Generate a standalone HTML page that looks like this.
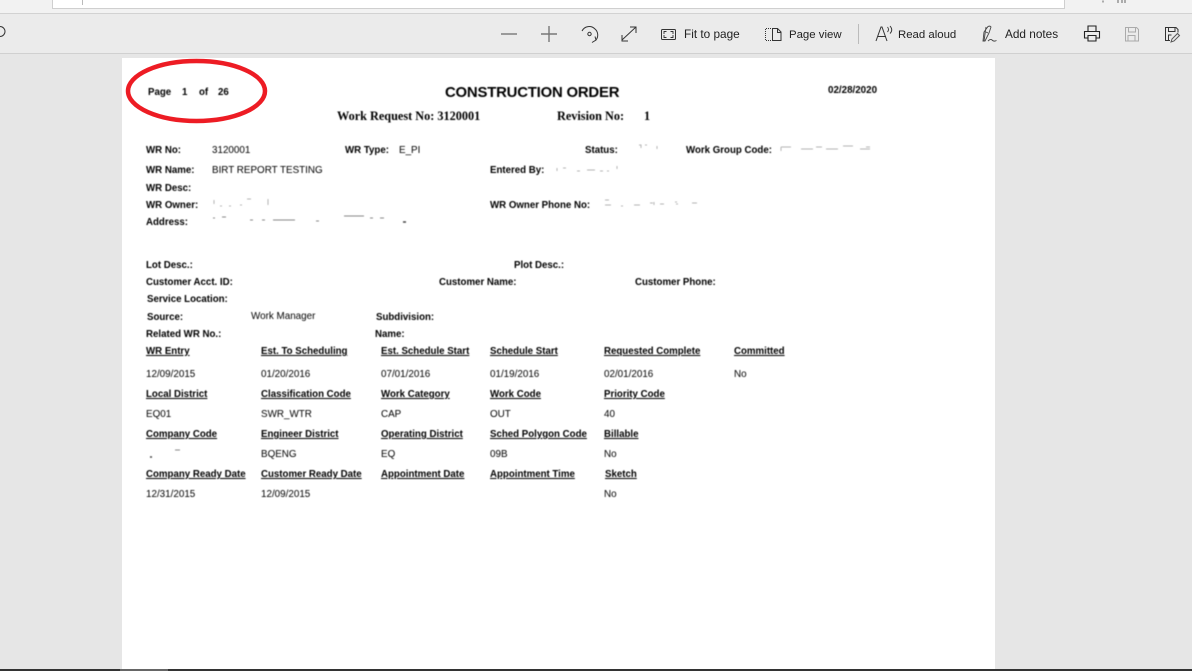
<!DOCTYPE html>
<html><head><meta charset="utf-8"><style>
html,body{margin:0;padding:0;width:1192px;height:671px;overflow:hidden;background:#e6e6e6}
body{position:relative;font-family:"Liberation Sans",sans-serif}
.a{position:absolute;white-space:nowrap}
#page{position:absolute;left:122px;top:58px;width:873px;height:611px;background:#fff}
#doc{position:absolute;left:0;top:0;width:1192px;height:671px;filter:blur(.4px);color:#000}
#doc span{position:absolute;white-space:nowrap;line-height:12px;font-size:9.85px;margin-top:2px}
#doc .b{font-weight:bold;font-size:9.7px}
#doc .u{font-weight:bold;font-size:9.7px;text-decoration:underline}
#doc .s{font-family:"Liberation Serif",serif;font-weight:bold;font-size:12.25px;line-height:14px;margin-top:0}
#doc .h{margin-top:0}
.t{position:absolute;white-space:nowrap;font-size:11.8px;line-height:16px;color:#222;top:26px}
svg.i{position:absolute;left:0;top:0}
</style></head><body>
<div class="a" style="left:0;top:0;width:1192px;height:13px;background:#f2f2f2"></div>
<div class="a" style="left:52px;top:0;width:1011px;height:8px;background:#fff;border:1px solid #cfcfcf;border-top:0"></div>
<div class="a" style="left:82px;top:0;width:1px;height:5px;background:#bbb"></div>
<div class="a" style="left:0;top:13px;width:1192px;height:41px;background:#ebebeb;border-top:1px solid #d2d2d2;border-bottom:1px solid #d0d0d0;box-sizing:border-box"></div>

<svg class="i" width="1192" height="58" fill="none" stroke="#444" stroke-width="1">
<path d="M0 26.500a5 5 0 0 1 0 10" stroke="#333"/>
<path d="M1103 0.500v2M1118 0v3M1122 0v3M1125 0v3" stroke="#666"/>
<path d="M501 34h16" stroke="#777" stroke-width="1.400"/>
<path d="M541 34h16M549 26v16" stroke="#777" stroke-width="1.400"/>
<path d="M582 31a8 8 0 0 1 13-2a8 8 0 0 1 1 11M592 42.500l4-2.500l-1-3.500" stroke="#333"/>
<circle cx="589.500" cy="34" r="1.700" stroke="#333"/>
<path d="M622 40l14-13M622 35v6h6M630 27h6v6" stroke="#333"/>
<rect x="661.500" y="29.500" width="14" height="10" stroke="#333" rx="1"/>
<path d="M664 34v-2.500h2.500M673 34v-2.500h-2.500M664 35v2.500h2.500M673 35v2.500h-2.500" stroke="#333" stroke-width=".9"/>
<path d="M771 28.500h-5.500v12h5.500" stroke="#333" stroke-dasharray="1 1"/>
<path d="M772.500 40.500v-12h5l3.500 3.500v8.500zM777.500 28.500v4h3.500" stroke="#333"/>
<path d="M858.500 24v20" stroke="#bbb"/>
<path d="M876 41l5-14h1l5 14M878 36.500h8" stroke="#333"/>
<path d="M887.500 27q2 2.500 0 5M890 26q3.500 4 0 7.500" stroke="#333" stroke-width=".9"/>
<path d="M983 41l1-9l4-5.500q2-1 3 .5l-2 6l-4 8zM986 27l-2 14M988 33l-2-1M988 41q2.500-2.500 4-1q2 2 4.500 .5" stroke="#444" stroke-width=".9"/>
<path d="M1088 32v-6h8v6M1088 38h-3.500v-6.500h15v6.500h-3.500M1088 35.500h8v5.500h-8z" stroke="#222" stroke-width="1.100"/>
<path d="M1125.500 27.500h11l2 2v11.500h-13zM1128.500 27.500v4.500h7v-4.500M1128 41v-5.500h7v5.500" stroke="#aaa"/>
<path d="M1170 40.500h-4.500v-13h10.500l2 2v3M1168.500 27.500v4h6.500v-4M1168.500 40v-5h3" stroke="#333"/>
<path d="M1171 42l1-3l5.500-5.500l2 2l-5.500 5.500z" stroke="#555"/>
</svg>

<div class="t" style="left:684px">Fit to page</div>
<div class="t" style="left:789px;top:27px;font-size:11.4px">Page view</div>
<div class="t" style="left:898px;top:27px;font-size:11.4px">Read aloud</div>
<div class="t" style="left:1005px">Add notes</div>

<div id="page"></div>

<div id="doc">
<span class="b" style="left:148px;top:85px">Page</span>
<span class="b" style="left:182px;top:85px">1</span>
<span class="b" style="left:199px;top:85px">of</span>
<span class="b" style="left:218px;top:85px">26</span>
<span class="b h" style="left:445px;top:85px;font-size:14.900px;line-height:16px;letter-spacing:-.2px">CONSTRUCTION ORDER</span>
<span class="b" style="left:828px;top:83px;font-size:9.800px">02/28/2020</span>
<span class="s" style="left:337px;top:109px">Work Request No: 3120001</span>
<span class="s" style="left:557px;top:109px">Revision No:</span>
<span class="s" style="left:644px;top:109px">1</span>

<span class="b" style="left:146px;top:143px">WR No:</span>
<span style="left:212px;top:143px">3120001</span>
<span class="b" style="left:345px;top:143px">WR Type:</span>
<span style="left:399px;top:143px">E_PI</span>
<span class="b" style="left:585px;top:143px">Status:</span>
<span class="b" style="left:686px;top:143px">Work Group Code:</span>

<span class="b" style="left:146px;top:163px">WR Name:</span>
<span style="left:212px;top:163px">BIRT REPORT TESTING</span>
<span class="b" style="left:490px;top:163px">Entered By:</span>
<span class="b" style="left:146px;top:181px">WR Desc:</span>
<span class="b" style="left:146px;top:198px">WR Owner:</span>
<span class="b" style="left:490px;top:198px">WR Owner Phone No:</span>
<span class="b" style="left:146px;top:215px">Address:</span>

<span class="b" style="left:146px;top:258px">Lot Desc.:</span>
<span class="b" style="left:514px;top:258px">Plot Desc.:</span>
<span class="b" style="left:146px;top:275px">Customer Acct. ID:</span>
<span class="b" style="left:439px;top:275px">Customer Name:</span>
<span class="b" style="left:635px;top:275px">Customer Phone:</span>
<span class="b" style="left:147px;top:292px">Service Location:</span>
<span class="b" style="left:147px;top:310px">Source:</span>
<span style="left:251px;top:309px">Work Manager</span>
<span class="b" style="left:376px;top:310px">Subdivision:</span>
<span class="b" style="left:146px;top:327px">Related WR No.:</span>
<span class="b" style="left:375px;top:327px">Name:</span>

<span class="u" style="left:146px;top:344px">WR Entry</span>
<span class="u" style="left:261px;top:344px">Est. To Scheduling</span>
<span class="u" style="left:381px;top:344px">Est. Schedule Start</span>
<span class="u" style="left:490px;top:344px">Schedule Start</span>
<span class="u" style="left:604px;top:344px">Requested Complete</span>
<span class="u" style="left:734px;top:344px">Committed</span>
<span style="left:146px;top:367px">12/09/2015</span>
<span style="left:261px;top:367px">01/20/2016</span>
<span style="left:381px;top:367px">07/01/2016</span>
<span style="left:490px;top:367px">01/19/2016</span>
<span style="left:604px;top:367px">02/01/2016</span>
<span style="left:734px;top:367px">No</span>

<span class="u" style="left:146px;top:387px">Local District</span>
<span class="u" style="left:261px;top:387px">Classification Code</span>
<span class="u" style="left:381px;top:387px">Work Category</span>
<span class="u" style="left:490px;top:387px">Work Code</span>
<span class="u" style="left:604px;top:387px">Priority Code</span>
<span style="left:146px;top:407px">EQ01</span>
<span style="left:261px;top:407px">SWR_WTR</span>
<span style="left:381px;top:407px">CAP</span>
<span style="left:490px;top:407px">OUT</span>
<span style="left:604px;top:407px">40</span>

<span class="u" style="left:146px;top:427px">Company Code</span>
<span class="u" style="left:261px;top:427px">Engineer District</span>
<span class="u" style="left:381px;top:427px">Operating District</span>
<span class="u" style="left:490px;top:427px">Sched Polygon Code</span>
<span class="u" style="left:604px;top:427px">Billable</span>
<span style="left:261px;top:447px">BQENG</span>
<span style="left:381px;top:447px">EQ</span>
<span style="left:490px;top:447px">09B</span>
<span style="left:604px;top:447px">No</span>

<span class="u" style="left:146px;top:467px">Company Ready Date</span>
<span class="u" style="left:261px;top:467px">Customer Ready Date</span>
<span class="u" style="left:381px;top:467px">Appointment Date</span>
<span class="u" style="left:490px;top:467px">Appointment Time</span>
<span class="u" style="left:605px;top:467px">Sketch</span>
<span style="left:146px;top:487px">12/31/2015</span>
<span style="left:261px;top:487px">12/09/2015</span>
<span style="left:604px;top:487px">No</span>

<svg class="i" width="1192" height="671" fill="none" stroke="#b4b4b4" stroke-width="1" style="filter:blur(.3px)">
<path d="M639 145h2v3M645 145h2M657 146v3M781 147h10M781 147v4M801 149h12M816 147h6M826 149h12M843 146h10M860 149h10M866 147h4"/>
<path d="M557 168v3M563 168h3M577 171h3M587 170h8M600 171h3M617 166v3M607 171h2"/>
<path d="M214 200v4M220 206h2M229 206h2M240 205h2M247 199h4M268 199v6"/>
<path d="M605 200h4M605 205h6M621 206h2M634 205h6M650 203h3M654 202v3M660 204h4M675 202h2M676 204h2M692 203h5"/>
<path d="M213 218h2M222 217h4M250 220h3M262 220h3M273 220h22M316 221h3M344 216h20M370 218h3M380 218h4" stroke="#888"/>
<path d="M403 222h3" stroke="#444" stroke-width="1.500"/>
<path d="M150 457h2" stroke="#444" stroke-width="1.500"/>
<path d="M175 450h5" stroke="#888"/>
</svg>
</div>

<svg class="i" width="1192" height="671" fill="none">
<ellipse cx="196.500" cy="91" rx="68.500" ry="30" stroke="#ed1c24" stroke-width="4.500"/>
</svg>

<div class="a" style="left:0;top:669px;width:1192px;height:2px;background:#333"></div>
<div class="a" style="left:120px;top:669px;width:48px;height:2px;background:#666"></div>
</body></html>
